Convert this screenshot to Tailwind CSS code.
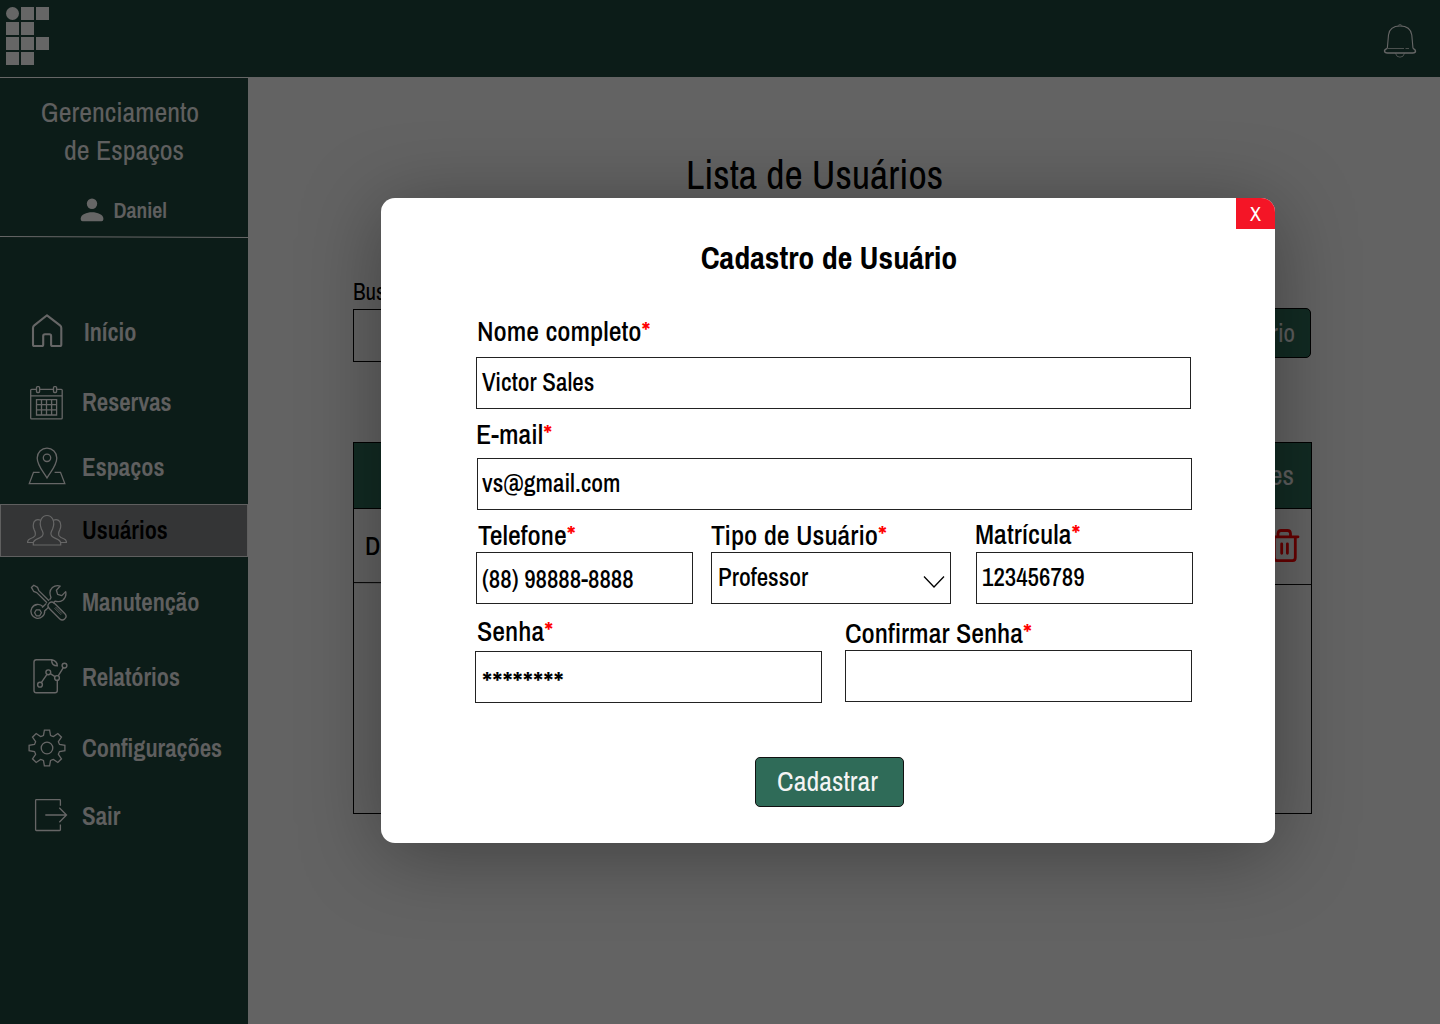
<!DOCTYPE html>
<html lang="pt-BR">
<head>
<meta charset="utf-8">
<title>Gerenciamento de Espaços</title>
<script src="https://cdn.jsdelivr.net/npm/@tailwindcss/browser@4"></script>
</head>
<body class="relative h-[1024px] w-[1440px] overflow-hidden bg-[#f8f8f8] font-['Archivo_Narrow','Liberation_Sans',sans-serif] text-black">
<div class="flex h-full flex-col">
  <header class="flex h-[77px] items-start justify-between bg-[#20463c]">
    <div class="ml-1.5 mt-[7px] grid grid-cols-3 gap-0.5">
      <i class="size-[13px] rounded-full bg-white"></i><i class="size-[13px] bg-white"></i><i class="size-[13px] bg-white"></i>
      <i class="size-[13px] bg-white"></i><i class="size-[13px] bg-white"></i><i class="size-[13px]"></i>
      <i class="size-[13px] bg-white"></i><i class="size-[13px] bg-white"></i><i class="size-[13px] bg-white"></i>
      <i class="size-[13px] bg-white"></i><i class="size-[13px] bg-white"></i>
    </div>
    <svg class="mr-5 mt-5 h-10 w-10" viewBox="1380 20 40 40" fill="none" stroke="#fff" stroke-width="1.1">
      <path d="M1387.3 48.5L1388.5 35Q1389.5 26 1400 26Q1410.5 26 1411.8 35L1413 48.5"/>
      <path d="M1387.3 48.3Q1384.5 49.3 1384.5 51Q1384.7 53 1387.5 53H1412.7Q1415.5 53 1415.5 51Q1415.5 49.3 1413 48.3" stroke-width="1.4"/>
      <path d="M1388 48.5H1404M1405.5 48.5H1409" stroke-width=".7"/>
      <path d="M1395.5 53.3Q1396.3 57.2 1400 57.2Q1403.7 57.2 1404.5 53.3M1398 25.8Q1398.4 24.6 1400 24.6Q1401.6 24.6 1402 25.8" stroke-width=".7"/>
    </svg>
  </header>
  <div class="flex flex-1">
    <aside class="flex w-[248px] flex-col border-t border-white bg-[#20463c] text-[#eee]">
      <h2 class="mt-[15px] text-center text-[28px] leading-[38px]"><span class="mr-2 -ml-1 inline-block pl-1">Gerenciamento</span><br>de Espaços</h2>
      <div class="mt-[25px] flex h-8 items-center">
        <svg class="ml-20 h-6 w-6" viewBox="80 198 24 24" fill="#fff"><circle cx="92" cy="203.8" r="5.2"/><path d="M80.8 219.5V218.3C80.8 214.5 86.5 212.2 92 212.2S103.3 214.5 103.3 218.3V219.5Q103.3 221.2 101.6 221.2H82.5Q80.8 221.2 80.8 219.5Z"/></svg>
        <span class="ml-[9.5px] text-[22px] font-semibold leading-8">Daniel</span>
      </div>
      <svg class="mt-[9px] h-1 w-[248px]" viewBox="0 235 248 4" stroke="#fff"><path d="M0 236.5L248 237.5"/></svg>
      <nav class="mt-[67px] flex flex-col text-[25px] font-semibold">
        <a class="flex h-[53px] items-center"><svg class="ml-[27px] h-[53px] w-10" viewBox="27 306 40 53" fill="none" stroke="#fff" stroke-width="2.1" stroke-linejoin="round"><path d="M47 315.3L60 325.4Q61.3 326.4 61.3 328V344.4Q61.3 346 59.8 346H52.6Q51.1 346 51.1 344.4V336Q51.1 334.3 49.4 334.3H45Q43.2 334.3 43.2 336V344.4Q43.2 346 41.7 346H34.5Q33 346 33 344.4V328Q33 326.4 34.3 325.4Z"/></svg><span class="ml-[17px]">Início</span></a>
        <a class="mt-[17px] flex h-[53px] items-center"><svg class="ml-[27px] h-[53px] w-10" viewBox="27 376 40 53" fill="none" stroke="#fff" stroke-width="1.3"><path d="M36.2 389.4H31.6Q30.7 389.4 30.7 390.3V418Q30.7 418.9 31.6 418.9H61.3Q62.2 418.9 62.2 418V390.3Q62.2 389.4 61.3 389.4H56.9M39.8 389.4H53.2M30.7 395.8H62.2"/><rect x="36.5" y="386.6" width="3.1" height="5.9" rx="1"/><rect x="53.5" y="386.6" width="3.1" height="5.9" rx="1"/><path d="M36.5 399.6H56.6V415H36.5ZM41.5 399.6V415M46.5 399.6V415M51.6 399.6V415M36.5 404.7H56.6M36.5 409.9H56.6"/></svg><span class="ml-[15px]">Reservas</span></a>
        <a class="mt-3 flex h-[53px] items-center"><svg class="ml-[27px] h-[53px] w-10" viewBox="27 441 40 53" fill="none" stroke="#fff" stroke-width="1.3"><circle cx="47" cy="457.8" r="3.7"/><path d="M47 478C43.5 472 37.2 465.5 37.2 458A9.8 9.8 0 0 1 56.8 458C56.8 465.5 50.5 472 47 478Z"/><path d="M39.6 472.3H33.5L29.3 483.6H64.8L60.5 472.3H54.6"/></svg><span class="ml-[15px]">Espaços</span></a>
        <a class="mt-2.5 flex h-[53px] items-center border border-[#eee] bg-[#828587] text-black"><svg class="ml-[26px] h-[53px] w-10" viewBox="27 504 40 53" fill="none" stroke="#fff" stroke-width="1.2"><path d="M33.3 545H60.7V542.8Q60.3 540.2 56 538.6Q50.7 536.7 50.9 533.2Q51.2 531.5 52.6 529Q54.8 523.5 52.8 519.3Q50.8 515.5 47 515.5Q43.2 515.5 41.2 519.3Q39.2 523.5 41.4 529Q42.8 531.5 43.1 533.2Q43.3 536.7 38 538.6Q33.7 540.2 33.3 542.8Z"/><path id="side" d="M40.6 520.3Q36.6 518.5 34.2 521.6Q32.3 525.5 34.1 529.6Q36 533 35 535.7Q34 537.5 30.2 538.8Q27.5 540 27.5 542.5H33"/><use href="#side" transform="translate(94 0) scale(-1 1)"/></svg><span class="ml-[15px]">Usuários</span></a>
        <a class="mt-[19px] flex h-[53px] items-center"><svg class="ml-[27px] h-[53px] w-10" viewBox="27 576 40 53" fill="none" stroke="#fff" stroke-width="1.3" stroke-linejoin="round"><path d="M47 602.8L36.8 592.6L33.6 591.3L31.4 587.4L33.8 585.2L37.6 587.4L38.8 590.6L49 600.8"/><rect x="-11" y="-3.6" width="22" height="7.2" rx="3.4" transform="translate(57 611) rotate(45)"/><path d="M54.5 608.2L61 614.8M55.5 607L62 613.6" stroke-width=".8"/><path d="M49.6 599.8L51 597.6Q48.3 591 52.4 587.4Q56 584.6 60.2 586L56.4 590.2L57.6 594.4L61.8 595.6L65.7 591.6Q66.8 597 62.8 600.2Q59.3 602.6 55 601.2L53 603.2M46.4 603.4L43 606.8M49 606.8L45.4 610.4"/><path d="M43 606.8A6.9 6.9 0 1 0 44.7 610.8L46 609.8M43.6 606.2L42 607.4"/><path d="M36.3 609.8H39.7L41.4 612.8L39.7 615.8H36.3L34.6 612.8Z"/></svg><span class="ml-[15px]">Manutenção</span></a>
        <a class="mt-[22px] flex h-[53px] items-center"><svg class="ml-[27px] h-[53px] w-[41px]" viewBox="27 651 41 53" fill="none" stroke="#fff" stroke-width="1.4"><path d="M57.3 679.8V690.4Q57.3 692.7 55 692.7H36.3Q34 692.7 34 690.4V662.1Q34 659.8 36.3 659.8H51.8Q57.3 661.2 57.3 665.8Q51.6 665.8 51.6 659.9"/><circle cx="40" cy="684.7" r="2.4"/><circle cx="48.3" cy="672.3" r="2.4"/><circle cx="57" cy="678" r="2.4"/><circle cx="64.5" cy="665.6" r="2.4"/><path d="M41.3 682.7L47 674.3M50.3 673.6L55 676.7M58.2 675.9L63.3 667.7"/></svg><span class="ml-[14px]">Relatórios</span></a>
        <a class="mt-[18px] flex h-[53px] items-center"><svg class="ml-[27px] h-[53px] w-10" viewBox="-20 -26 40 53" fill="none" stroke="#fff" stroke-width="1.3"><g id="t2"><path id="tooth" d="M-4.9 -11.8L-3.5 -12.6L-2.6 -17.9H2.6L3.5 -12.6L4.9 -11.8"/><use href="#tooth" transform="rotate(45)"/></g><use href="#t2" transform="rotate(90)"/><use href="#t2" transform="rotate(180)"/><use href="#t2" transform="rotate(270)"/><circle r="5.8"/></svg><span class="ml-[15px]">Configurações</span></a>
        <a class="mt-[15px] flex h-[53px] items-center"><svg class="ml-[27px] h-[53px] w-[41px]" viewBox="27 790 41 53" fill="none" stroke="#fff" stroke-width="1.3"><path d="M60.4 805.8V800.4Q60.4 799.6 59.6 799.6H36.4Q35.6 799.6 35.6 800.4V829.7Q35.6 830.5 36.4 830.5H59.6Q60.4 830.5 60.4 829.7V824.4M45.3 815H66.3M59.3 807.8L66.5 815L59.3 822.2"/></svg><span class="ml-[14px]">Sair</span></a>
      </nav>
    </aside>
    <main class="flex flex-1 flex-col pl-[105px] pr-32">
      <h1 class="mt-[71px] pr-9 text-center text-[40px] leading-[54px]">Lista de Usuários</h1>
      <div class="mt-[76px] flex items-end justify-between">
        <div><p class="-mt-px text-[23px] leading-[30px]">Buscar</p><div class="mt-0.5 h-[53px] w-[560px] border border-black"></div></div>
        <button class="mb-1 mr-px h-[50px] rounded-[5px] border border-black bg-[#2f6b58] px-[15px] pt-0.5 text-[25px] text-[#eee]">Novo Usuário</button>
      </div>
      <div class="mt-20 h-[372px] border border-black">
        <div class="flex h-[66px] items-center justify-end border-b border-black bg-[#2f6b58] pb-0.5 pr-[17px] text-[28px] text-[#eee]">Ações</div>
        <div class="flex h-[73px] items-center justify-between pl-[11px] pr-2.5">
          <span class="text-[26px] font-medium">Daniel</span>
          <svg class="-mt-0.5 h-9 w-8" viewBox="1269 527 32 36" fill="none" stroke="#f00" stroke-width="2.8" stroke-linecap="round" stroke-linejoin="round"><path d="M1271.5 536.8H1298M1274.3 537V557.5Q1274.3 560.6 1277 560.6H1292.6Q1295.3 560.6 1295.3 557.5V537M1278 536.5V533.5Q1278.3 530.5 1281 530.5H1287.5Q1290.3 530.5 1290.5 533.5V536.5M1281.7 543.8V553.3M1287.4 543.8V553.3"/></svg>
        </div>
        <svg class="h-[3px] w-full" viewBox="0 0 957 3" preserveAspectRatio="none" stroke="#000"><path d="M0 .6L957 2.6"/></svg>
      </div>
    </main>
  </div>
</div>

<div class="absolute inset-0 bg-black/60"></div>

<section class="absolute left-[381px] top-[198px] h-[645px] w-[894px] rounded-[14px] bg-white shadow-[0_10px_80px_rgba(0,0,0,0.35)]">
  <div class="flex h-[31px] justify-end overflow-hidden rounded-tr-[14px]">
    <button class="w-[39px] bg-[#f41526] text-xl leading-[31px] text-white">X</button>
  </div>
  <h2 class="mt-[9px] pl-0.5 text-center text-[32px] font-bold leading-10">Cadastro de Usuário</h2>
  <form class="ml-[94px] mt-[37px] text-[25px] font-medium">
    <div class="ml-px">
      <label class="block pl-px text-[28px] leading-8">Nome completo<span class="text-[#f00]">*</span></label>
      <div class="mt-2.5 flex h-[52px] w-[715px] items-center border border-[#222] pl-[5px]">Victor Sales</div>
    </div>
    <div class="ml-px mt-[9px]">
      <label class="block text-[28px] leading-8">E-mail<span class="text-[#f00]">*</span></label>
      <div class="ml-px mt-2 flex h-[52px] w-[715px] items-center border border-[#222] pl-1">vs@gmail.com</div>
    </div>
    <div class="ml-px mt-[9px] flex">
      <div class="w-[217px]">
        <label class="block pl-0.5 text-[28px] leading-8">Telefone<span class="text-[#f00]">*</span></label>
        <div class="mt-px flex h-[52px] items-center border border-[#222] pl-[5px] pt-1">(88) 98888-8888</div>
      </div>
      <div class="ml-[18px] w-[240px]">
        <label class="block text-[28px] leading-8">Tipo de Usuário<span class="text-[#f00]">*</span></label>
        <div class="mt-px flex h-[52px] items-center justify-between border border-[#222] pl-1.5 pr-[5px]"><span class="-mt-px">Professor</span>
          <svg class="mt-2 h-3.5 w-[22px]" viewBox="0 0 22 14" fill="none" stroke="#000" stroke-width="1.3"><path d="M1 1.5L11 12L21 1.5"/></svg></div>
      </div>
      <div class="-mt-px ml-[25px] w-[217px]">
        <label class="-ml-px block text-[28px] leading-8">Matrícula<span class="text-[#f00]">*</span></label>
        <div class="mt-0.5 flex h-[52px] items-center border border-[#222] pb-px pl-[5px]">123456789</div>
      </div>
    </div>
    <div class="mt-[11px] flex">
      <div class="w-[347px]">
        <label class="block pl-0.5 text-[28px] leading-8">Senha<span class="text-[#f00]">*</span></label>
        <div class="mt-1 flex h-[52px] items-center border border-[#222] pl-1.5 pt-3 text-[32px]">********</div>
      </div>
      <div class="ml-[23px] mt-0.5 w-[347px]">
        <label class="block text-[28px] leading-8">Confirmar Senha<span class="text-[#f00]">*</span></label>
        <div class="mt-px h-[52px] border border-[#222]"></div>
      </div>
    </div>
  </form>
  <button class="ml-[374px] mt-[54px] h-[50px] w-[149px] rounded-[5px] border border-[#111] bg-[#2f6b58] pb-0.5 pr-1 text-[28px] text-[#f4f4f4]">Cadastrar</button>
</section>
</body>
</html>
